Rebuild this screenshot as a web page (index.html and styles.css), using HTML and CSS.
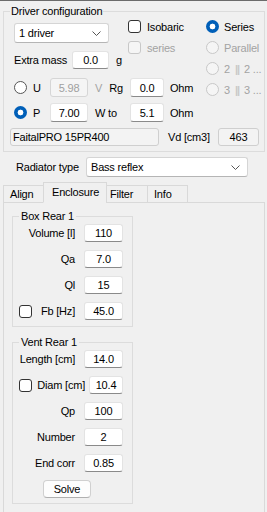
FILE: index.html
```html
<!DOCTYPE html>
<html lang="en">
<head>
<meta charset="UTF-8">
<meta name="viewport" content="width=device-width, initial-scale=1.0">
<title>Driver configuration</title>
<link rel="stylesheet" href="styles.css">
</head>
<body>

<fieldset class="group driver">
  <legend>Driver configuration</legend>
  <div class="driver-top">
    <div class="driver-left">
      <div class="head-row">
        <div class="head-fields">
          <div class="select drivers">
            <span>1 driver</span>
            <svg width="9" height="5" viewBox="0 0 9 5"><path d="M0.5 0.5 L4.5 4.5 L8.5 0.5" fill="none" stroke="#555" stroke-width="1"/></svg>
          </div>
          <div class="mass-row">
            <span class="mass-label">Extra mass</span>
            <span class="box w37">0.0</span>
            <span class="unit-g">g</span>
          </div>
        </div>
        <div class="checks">
          <div class="check"><span class="cb"></span>Isobaric</div>
          <div class="check disabled"><span class="cb"></span>series</div>
        </div>
      </div>
      <div class="power">
        <div class="radio"><span class="rb"></span>U</div>
        <span class="box w38 off">5.98</span>
        <span class="mid"><span class="disabled">V</span><span class="rg">Rg</span></span>
        <span class="box w34">0.0</span>
        <span class="ohm">Ohm</span>

        <div class="radio"><span class="rb on"></span>P</div>
        <span class="box w38">7.00</span>
        <span class="mid">W to</span>
        <span class="box w34">5.1</span>
        <span class="ohm">Ohm</span>
      </div>
    </div>
    <div class="radios">
      <div class="radio"><span class="rb on"></span>Series</div>
      <div class="radio disabled"><span class="rb"></span>Parallel</div>
      <div class="radio disabled"><span class="rb"></span>2 <span class="bars">||</span> 2 ...</div>
      <div class="radio disabled"><span class="rb"></span>3 <span class="bars">||</span> 3 ...</div>
    </div>
  </div>
  <div class="model-row">
    <span class="box readonly model">FaitalPRO 15PR400</span>
    <span class="vd-label">Vd [cm3]</span>
    <span class="box readonly w40">463</span>
  </div>
</fieldset>

<div class="radiator">
  <span class="radiator-label">Radiator type</span>
  <div class="select wide">
    <span>Bass reflex</span>
    <svg width="9" height="5" viewBox="0 0 9 5"><path d="M0.5 0.5 L4.5 4.5 L8.5 0.5" fill="none" stroke="#555" stroke-width="1"/></svg>
  </div>
</div>

<div class="tabs">
  <div class="tab t-align">Align</div>
  <div class="tab t-encl active">Enclosure</div>
  <div class="tab t-filter">Filter</div>
  <div class="tab t-info">Info</div>
  <div class="tab-fill"></div>
</div>

<div class="panel">
  <fieldset class="group sub">
    <legend>Box Rear 1</legend>
    <div class="rows">
      <div class="row"><span class="lbl">Volume [l]</span><span class="box w39">110</span></div>
      <div class="row"><span class="lbl">Qa</span><span class="box w39">7.0</span></div>
      <div class="row"><span class="lbl">Ql</span><span class="box w39">15</span></div>
      <div class="row"><span class="cb"></span><span class="lbl">Fb [Hz]</span><span class="box w39">45.0</span></div>
    </div>
  </fieldset>

  <fieldset class="group sub vent">
    <legend>Vent Rear 1</legend>
    <div class="rows">
      <div class="row"><span class="lbl">Length [cm]</span><span class="box w39">14.0</span></div>
      <div class="row"><span class="cb"></span><span class="lbl tight">Diam [cm]</span><span class="box w34">10.4</span></div>
      <div class="row"><span class="lbl">Qp</span><span class="box w39">100</span></div>
      <div class="row"><span class="lbl">Number</span><span class="box w39">2</span></div>
      <div class="row"><span class="lbl">End corr</span><span class="box w39">0.85</span></div>
      <div class="row"><button class="solve">Solve</button></div>
    </div>
  </fieldset>
</div>

</body>
</html>
```

FILE: styles.css
```css
* { box-sizing: border-box; }
body { margin: 0; width: 267px; height: 512px; overflow: hidden; background: #f0f0f0; border-top: 1px solid #6b6b6b; font-family: "Liberation Sans", Arial, sans-serif; font-size: 11px; letter-spacing: -0.2px; color: #000; }

.group { margin: 0; border: 1px solid #dcdcdc; min-width: 0; }
.group legend { line-height: 15px; }

.driver { margin: 3px 2px 0 3px; padding: 0 0 5px 6px; }
.driver legend { padding: 0 1px; }
.driver-top { display: flex; }
.driver-left { width: 196px; }
.head-row { display: flex; }
.head-fields { width: 118px; padding: 4px 0 0 4px; }

.select { display: flex; align-items: center; justify-content: space-between; height: 20px; background: #fff; border: 1px solid #d5d5d5; border-bottom-color: #b5b5b5; border-radius: 3px; padding: 0 7px 0 4px; }
.select.drivers { width: 95px; }
.select.wide { width: 162px; }

.mass-row { display: flex; align-items: center; height: 18px; margin-top: 8px; }
.mass-label { width: 58px; }
.unit-g { margin-left: 7px; }

.box { display: flex; align-items: center; justify-content: center; height: 18px; background: #fff; border: 1px solid #e3e3e3; border-bottom-color: #8a8a8a; border-radius: 3px; flex: none; }
.box.off { background: #f5f5f5; border-color: #d6d6d6; color: #a0a0a0; }
.box.readonly { background: #f3f3f3; border-color: #cfcfcf; }
.w34 { width: 34px; }
.w37 { width: 37px; }
.w38 { width: 38px; }
.w39 { width: 39px; }
.w40 { width: 41px; }

.checks { display: flex; flex-direction: column; gap: 8px; padding-top: 1px; }
.check, .radio { display: flex; align-items: center; height: 13px; }
.check { gap: 6px; }
.radio { gap: 5px; }
.cb { width: 13px; height: 13px; border: 1px solid #333; border-radius: 3px; background: #fff; flex: none; }
.rb { width: 13px; height: 13px; border: 1px solid #555; border-radius: 50%; background: #fff; flex: none; }
.rb.on { border: none; background: radial-gradient(circle, #fff 0 2.6px, #005fb8 3.2px); }
.disabled { color: #a3a3a3; }
.disabled .cb, .disabled .rb { border-color: #c8c8c8; background: #f5f5f5; }
.bars { color: #c8c8c8; letter-spacing: -1px; font-weight: bold; }

.radios { display: flex; flex-direction: column; gap: 8px; padding-top: 1px; }

.power { display: grid; grid-template-columns: 36px 38px 42px 34px auto; grid-auto-rows: 19px; row-gap: 6px; align-items: center; margin: 9px 0 0 4px; }
.power .radio { gap: 6px; }
.power .box { height: 19px; }
.mid { padding-left: 7px; }
.rg { margin-left: 7px; }
.ohm { padding-left: 6px; }

.model-row { display: flex; align-items: center; margin-top: 6px; }
.model { width: 149px; justify-content: flex-start; padding-left: 2px; }
.vd-label { width: 50px; margin-left: 9px; }

.radiator { display: flex; align-items: center; height: 20px; margin: 5px 0 0 16px; }
.radiator-label { width: 70px; }

.tabs { display: flex; align-items: flex-end; height: 21px; margin: 5px 2px 0 3px; }
.tab { display: flex; align-items: center; height: 18px; border: 1px solid #d9d9d9; background: #f0f0f0; margin-left: -1px; }
.tab:first-child { margin-left: 0; }
.tab.active { height: 21px; border-bottom-color: #f0f0f0; padding-bottom: 2px; }
.t-align { width: 41px; padding-left: 6px; }
.t-encl { width: 64px; padding-left: 8px; }
.t-filter { width: 42px; padding-left: 3px; }
.t-info { width: 41px; padding-left: 6px; }
.tab-fill { flex: 1; border-bottom: 1px solid #d9d9d9; }

.panel { height: 320px; margin: 0 2px 0 3px; border: 1px solid #d9d9d9; border-top: none; padding: 6px 0 0 8px; }
.sub { width: 121px; padding: 0 9px 6px 6px; }
.sub legend { padding: 0 2px; }
.sub.vent { margin-top: 8px; padding-bottom: 5px; }
.rows { display: flex; flex-direction: column; gap: 8px; }
.row { display: flex; align-items: center; height: 18px; }
.lbl { margin-left: auto; margin-right: 9px; }
.lbl.tight { margin-right: 4px; }

.solve { width: 48px; height: 18px; margin-left: 24px; padding: 0; background: #fdfdfd; border: 1px solid #d0d0d0; border-bottom-color: #b0b0b0; border-radius: 4px; font: inherit; letter-spacing: inherit; color: #000; }
```
